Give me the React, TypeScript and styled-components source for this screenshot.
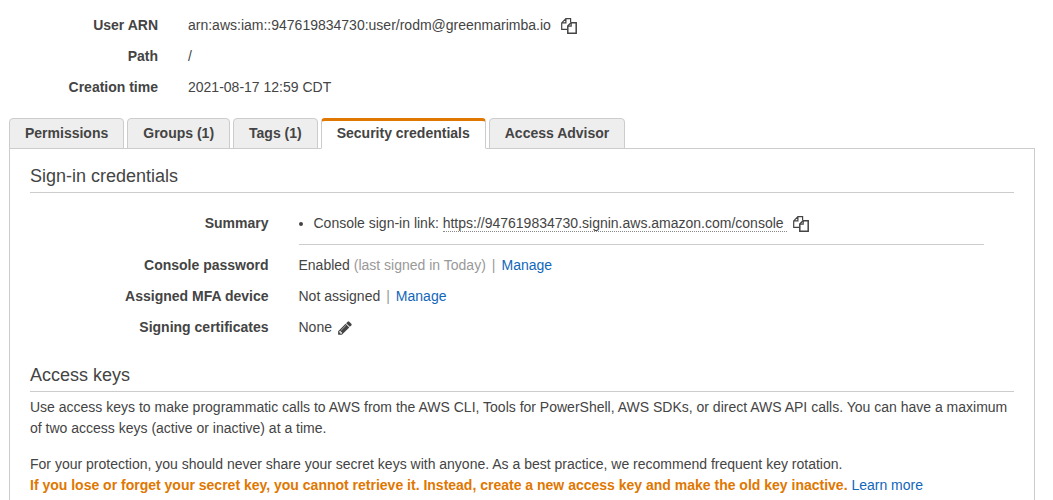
import React from "react";
import styled, { createGlobalStyle } from "styled-components";

const GlobalStyle = createGlobalStyle`
  body {
    margin: 0;
    background: #fff;
    color: #444;
    font: 14px/21px "Liberation Sans", Arial, sans-serif;
  }
`;

const Page = styled.main`
  height: 100vh;
  overflow: hidden;
  box-sizing: border-box;
  padding: 15px 18px 0 9px;
`;

const Details = styled.dl<{ $labelWidth: string }>`
  display: grid;
  grid-template-columns: ${(p) => p.$labelWidth} 1fr;
  gap: 10px 30px;
  margin: 0;
`;

const Term = styled.dt`
  font-weight: bold;
  text-align: right;
`;

const Value = styled.dd`
  margin: 0;
`;

const TabBar = styled.div`
  display: flex;
  gap: 3px;
  margin-top: 20px;
`;

const Tab = styled.button<{ $active?: boolean }>`
  box-sizing: border-box;
  height: 31px;
  margin: 0 0 -1px;
  padding: ${(p) => (p.$active ? "0 15px 3px" : "0 15px")};
  border: 1px solid #ccc;
  border-top: ${(p) => (p.$active ? "3px solid #e07700" : "1px solid #ccc")};
  border-bottom-color: ${(p) => (p.$active ? "#fff" : "#ccc")};
  border-radius: 4px 4px 0 0;
  background: ${(p) => (p.$active ? "#fff" : "#eee")};
  color: #444;
  font: bold 14px/21px "Liberation Sans", Arial, sans-serif;
  white-space: nowrap;
  position: relative;
  cursor: pointer;
`;

const Panel = styled.section`
  padding: 17px 20px 20px;
  border: 1px solid #ccc;
`;

const Heading = styled.h2`
  margin: 0;
  padding-bottom: 5px;
  border-bottom: 1px solid #ccc;
  font-size: 18px;
  line-height: 21px;
  font-weight: normal;
`;

const SignIn = styled.div`
  margin: 20px 30px 27px 0;
`;

const SummaryList = styled.ul`
  margin: 0;
  padding: 0 0 10px 15px;
  border-bottom: 1px solid #ccc;
`;

const SignInUrl = styled.span`
  padding-right: 3px;
  border-bottom: 1px dotted #888;
`;

const Muted = styled.span`
  color: #999;
`;

const Separator = styled.span`
  margin: 0 6px;
  color: #999;
`;

const Link = styled.a`
  color: #1166bb;
  text-decoration: none;
`;

const Paragraph = styled.p`
  margin: 5px 0 15px;
`;

const Warning = styled.strong`
  color: #e07700;
`;

const IconButton = styled.button<{ $gap: number }>`
  margin: 0 0 0 ${(p) => p.$gap}px;
  padding: 0;
  border: 0;
  background: none;
  color: #444;
  line-height: 0;
  vertical-align: -4px;
  cursor: pointer;
`;

const CopyButton = ({ label, gap }: { label: string; gap: number }) => (
  <IconButton type="button" aria-label={label} $gap={gap}>
    <svg width="16" height="16" viewBox="0 0 16 16" fill="none" stroke="currentColor">
      <path strokeWidth="1.2" d="M6.5 11.4H.7V4.9L4.9.7H9.6V4M4.9.7V4.9H.7" />
      <path strokeWidth="1.5" fill="#fff" d="M6.8 8L10 4.8H15.2V15.2H6.8Z" />
      <path strokeWidth="1.2" d="M10.2 4.8V8.2H6.8" />
    </svg>
  </IconButton>
);

const EditButton = ({ label, gap }: { label: string; gap: number }) => (
  <IconButton type="button" aria-label={label} $gap={gap}>
    <svg width="16" height="16" viewBox="0 0 1792 1792" fill="currentColor">
      <path d="M491 1536l91-91-235-235-91 91v107h128v128h107zm523-928q0-22-22-22-10 0-17 7l-542 542q-7 7-7 17 0 22 22 22 10 0 17-7l542-542q7-7 7-17zm-54-192l416 416-832 832h-416v-416zm683 96q0 53-37 90l-166 166-416-416 166-165q36-38 90-38 53 0 91 38l235 234q37 39 37 91z" />
    </svg>
  </IconButton>
);

const tabs = ["Permissions", "Groups (1)", "Tags (1)", "Security credentials", "Access Advisor"];
const activeTab = "Security credentials";

export default function App() {
  return (
    <Page>
      <GlobalStyle />
      <Details $labelWidth="149px">
        <Term>User ARN</Term>
        <Value>
          arn:aws:iam::947619834730:user/rodm@greenmarimba.io
          <CopyButton label="Copy user ARN" gap={10} />
        </Value>
        <Term>Path</Term>
        <Value>/</Value>
        <Term>Creation time</Term>
        <Value>2021-08-17 12:59 CDT</Value>
      </Details>

      <TabBar role="tablist">
        {tabs.map((name) => (
          <Tab key={name} type="button" role="tab" aria-selected={name === activeTab} $active={name === activeTab}>
            {name}
          </Tab>
        ))}
      </TabBar>

      <Panel role="tabpanel">
        <Heading>Sign-in credentials</Heading>
        <SignIn>
          <Details $labelWidth="25%">
            <Term>Summary</Term>
            <Value>
              <SummaryList>
                <li>
                  Console sign-in link: <SignInUrl>https://947619834730.signin.aws.amazon.com/console</SignInUrl>
                  <CopyButton label="Copy sign-in link" gap={6} />
                </li>
              </SummaryList>
            </Value>
            <Term>Console password</Term>
            <Value>
              Enabled <Muted>(last signed in Today)</Muted>
              <Separator>|</Separator>
              <Link href="#password">Manage</Link>
            </Value>
            <Term>Assigned MFA device</Term>
            <Value>
              Not assigned
              <Separator>|</Separator>
              <Link href="#mfa">Manage</Link>
            </Value>
            <Term>Signing certificates</Term>
            <Value>
              None
              <EditButton label="Edit signing certificates" gap={5} />
            </Value>
          </Details>
        </SignIn>

        <Heading>Access keys</Heading>
        <Paragraph>
          Use access keys to make programmatic calls to AWS from the AWS CLI, Tools for PowerShell, AWS SDKs, or direct
          AWS API calls. You can have a maximum of two access keys (active or inactive) at a time.
        </Paragraph>
        <Paragraph>
          For your protection, you should never share your secret keys with anyone. As a best practice, we recommend
          frequent key rotation.
          <br />
          <Warning>
            If you lose or forget your secret key, you cannot retrieve it. Instead, create a new access key and make the
            old key inactive.
          </Warning>{" "}
          <Link href="#learn">Learn more</Link>
        </Paragraph>
      </Panel>
    </Page>
  );
}
